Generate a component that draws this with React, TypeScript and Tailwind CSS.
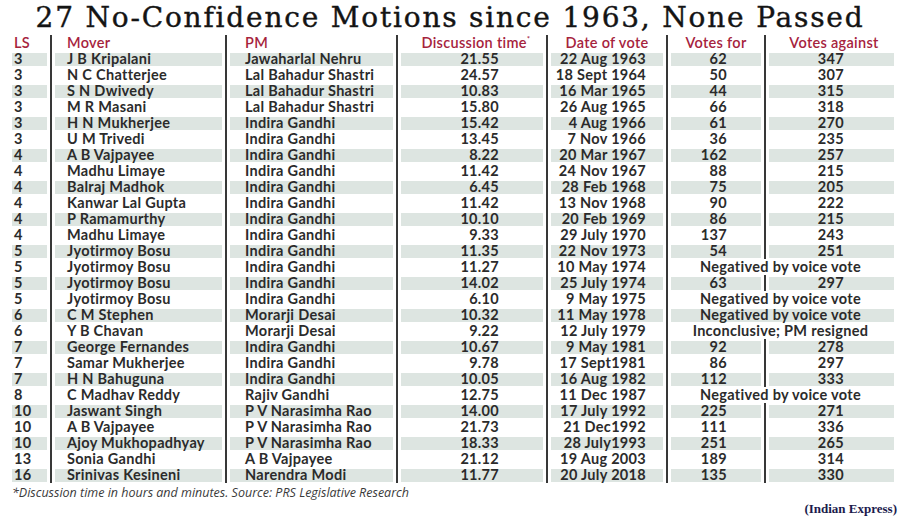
type Motion = {
  ls: string;
  mover: string;
  pm: string;
  time: string;
  date: string;
  votes: [string, string] | string;
};

const motions: Motion[] = [
  { ls: "3", mover: "J B Kripalani", pm: "Jawaharlal Nehru", time: "21.55", date: "22 Aug 1963", votes: ["62", "347"] },
  { ls: "3", mover: "N C Chatterjee", pm: "Lal Bahadur Shastri", time: "24.57", date: "18 Sept 1964", votes: ["50", "307"] },
  { ls: "3", mover: "S N Dwivedy", pm: "Lal Bahadur Shastri", time: "10.83", date: "16 Mar 1965", votes: ["44", "315"] },
  { ls: "3", mover: "M R Masani", pm: "Lal Bahadur Shastri", time: "15.80", date: "26 Aug 1965", votes: ["66", "318"] },
  { ls: "3", mover: "H N Mukherjee", pm: "Indira Gandhi", time: "15.42", date: "4 Aug 1966", votes: ["61", "270"] },
  { ls: "3", mover: "U M Trivedi", pm: "Indira Gandhi", time: "13.45", date: "7 Nov 1966", votes: ["36", "235"] },
  { ls: "4", mover: "A B Vajpayee", pm: "Indira Gandhi", time: "8.22", date: "20 Mar 1967", votes: ["162", "257"] },
  { ls: "4", mover: "Madhu Limaye", pm: "Indira Gandhi", time: "11.42", date: "24 Nov 1967", votes: ["88", "215"] },
  { ls: "4", mover: "Balraj Madhok", pm: "Indira Gandhi", time: "6.45", date: "28 Feb 1968", votes: ["75", "205"] },
  { ls: "4", mover: "Kanwar Lal Gupta", pm: "Indira Gandhi", time: "11.42", date: "13 Nov 1968", votes: ["90", "222"] },
  { ls: "4", mover: "P Ramamurthy", pm: "Indira Gandhi", time: "10.10", date: "20 Feb 1969", votes: ["86", "215"] },
  { ls: "4", mover: "Madhu Limaye", pm: "Indira Gandhi", time: "9.33", date: "29 July 1970", votes: ["137", "243"] },
  { ls: "5", mover: "Jyotirmoy Bosu", pm: "Indira Gandhi", time: "11.35", date: "22 Nov 1973", votes: ["54", "251"] },
  { ls: "5", mover: "Jyotirmoy Bosu", pm: "Indira Gandhi", time: "11.27", date: "10 May 1974", votes: "Negatived by voice vote" },
  { ls: "5", mover: "Jyotirmoy Bosu", pm: "Indira Gandhi", time: "14.02", date: "25 July 1974", votes: ["63", "297"] },
  { ls: "5", mover: "Jyotirmoy Bosu", pm: "Indira Gandhi", time: "6.10", date: "9 May 1975", votes: "Negatived by voice vote" },
  { ls: "6", mover: "C M Stephen", pm: "Morarji Desai", time: "10.32", date: "11 May 1978", votes: "Negatived by voice vote" },
  { ls: "6", mover: "Y B Chavan", pm: "Morarji Desai", time: "9.22", date: "12 July 1979", votes: "Inconclusive; PM resigned" },
  { ls: "7", mover: "George Fernandes", pm: "Indira Gandhi", time: "10.67", date: "9 May 1981", votes: ["92", "278"] },
  { ls: "7", mover: "Samar Mukherjee", pm: "Indira Gandhi", time: "9.78", date: "17 Sept1981", votes: ["86", "297"] },
  { ls: "7", mover: "H N Bahuguna", pm: "Indira Gandhi", time: "10.05", date: "16 Aug 1982", votes: ["112", "333"] },
  { ls: "8", mover: "C Madhav Reddy", pm: "Rajiv Gandhi", time: "12.75", date: "11 Dec 1987", votes: "Negatived by voice vote" },
  { ls: "10", mover: "Jaswant Singh", pm: "P V Narasimha Rao", time: "14.00", date: "17 July 1992", votes: ["225", "271"] },
  { ls: "10", mover: "A B Vajpayee", pm: "P V Narasimha Rao", time: "21.73", date: "21 Dec1992", votes: ["111", "336"] },
  { ls: "10", mover: "Ajoy Mukhopadhyay", pm: "P V Narasimha Rao", time: "18.33", date: "28 July1993", votes: ["251", "265"] },
  { ls: "13", mover: "Sonia Gandhi", pm: "A B Vajpayee", time: "21.12", date: "19 Aug 2003", votes: ["189", "314"] },
  { ls: "16", mover: "Srinivas Kesineni", pm: "Narendra Modi", time: "11.77", date: "20 July 2018", votes: ["135", "330"] },
];

const cols = "grid grid-cols-[40px_175px_171px_150px_120px_98px_128px]";
const divider = "border-r-2 border-[#383838]";
const bandBg = "bg-[#dde5e1]";

function Cell({ band, last, first, className, children }: { band: boolean; last?: boolean; first?: boolean; className: string; children: React.ReactNode }) {
  return (
    <div className={`flex items-center ${last ? "" : divider}`}>
      <div
        className={`flex h-[13px] flex-1 items-center whitespace-nowrap ${first ? "ml-0" : "ml-[3px]"} ${last ? "mr-0" : "mr-[3px]"} ${band ? bandBg : ""} ${className}`}
      >
        {children}
      </div>
    </div>
  );
}

function Row({ m, band }: { m: Motion; band: boolean }) {
  return (
    <div className={`${cols} h-4`}>
      <Cell band={band} first className="pl-[2px]">{m.ls}</Cell>
      <Cell band={band} className="pl-3">{m.mover}</Cell>
      <Cell band={band} className="pl-[15px]">{m.pm}</Cell>
      <Cell band={band} className="justify-end pr-[44px]">{m.time}</Cell>
      <Cell band={band} className="justify-end pr-[17px]">{m.date}</Cell>
      {typeof m.votes === "string" ? (
        <div className="col-span-2 flex items-center">
          <div className={`ml-[3px] flex h-[13px] flex-1 items-center justify-center whitespace-nowrap pr-1 ${band ? bandBg : ""}`}>
            {m.votes}
          </div>
        </div>
      ) : (
        <>
          <Cell band={band} className="justify-end pr-[34px]">{m.votes[0]}</Cell>
          <Cell band={band} last className="justify-end pr-[50px]">{m.votes[1]}</Cell>
        </>
      )}
    </div>
  );
}

function HeaderRow() {
  const h = "flex items-center whitespace-nowrap text-[#a6233d]";
  return (
    <div className={`${cols} h-4 font-semibold tracking-[0.3px]`}>
      <div className={`${h} ${divider} pl-[2px]`}>LS</div>
      <div className={`${h} ${divider} pl-[15px]`}>Mover</div>
      <div className={`${h} ${divider} pl-[18px]`}>PM</div>
      <div className={`${h} ${divider} justify-center pl-2`}>
        Discussion time<sup className="text-[8px]">*</sup>
      </div>
      <div className={`${h} ${divider} justify-center`}>Date of vote</div>
      <div className={`${h} ${divider} justify-center`}>Votes for</div>
      <div className={`${h} justify-center pl-2`}>Votes against</div>
    </div>
  );
}

export default function App() {
  return (
    <div className="relative h-[517px] w-[900px] overflow-hidden bg-white">
      <h1 className="h-[35px] text-center font-['DejaVu_Serif',serif] text-[28px] leading-[35px] tracking-[1.8px] text-[#141414] [-webkit-text-stroke:0.4px_#141414]">
        27 No-Confidence Motions since 1963, None Passed
      </h1>
      <div className="ml-3 font-['Lato',sans-serif] text-[14.5px] font-bold leading-none tracking-[0.3px] text-[#2b2b2b]">
        <HeaderRow />
        {motions.map((m, i) => (
          <Row key={i} m={m} band={i % 2 === 0} />
        ))}
      </div>
      <p className="ml-3 mt-[2px] font-['Open_Sans',sans-serif] text-[12.5px] italic leading-4 text-[#3a3a3a]">
        *Discussion time in hours and minutes. Source: PRS Legislative Research
      </p>
      <p className="pr-[3px] text-right font-['Liberation_Serif',serif] text-[13px] font-bold leading-4 text-[#1b1b4d]">
        (Indian Express)
      </p>
    </div>
  );
}
